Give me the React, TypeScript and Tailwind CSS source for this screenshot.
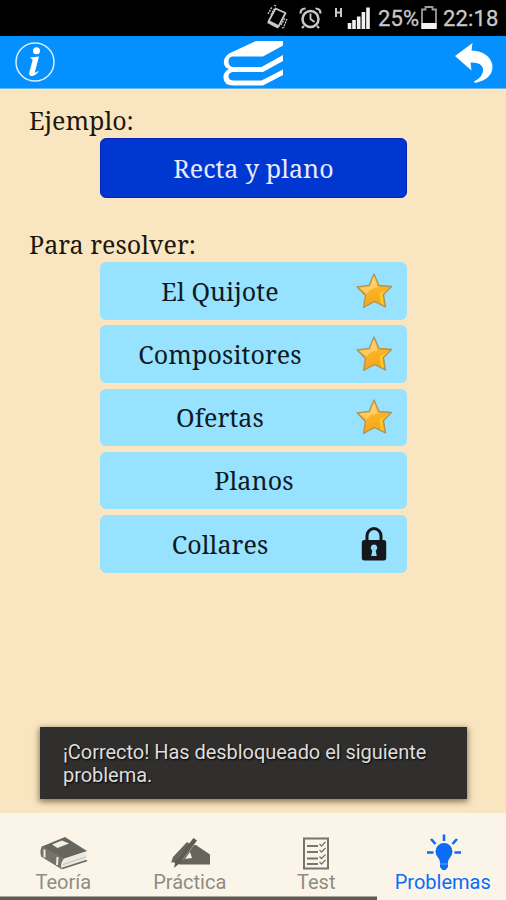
import type { ReactNode } from 'react';

type Problem = {
  name: string;
  status?: 'solved' | 'locked';
};

const problems: Problem[] = [
  { name: 'El Quijote', status: 'solved' },
  { name: 'Compositores', status: 'solved' },
  { name: 'Ofertas', status: 'solved' },
  { name: 'Planos' },
  { name: 'Collares', status: 'locked' },
];

const StarIcon = () => (
  <svg width="38" height="38" viewBox="0 0 38 38">
    <defs>
      <linearGradient id="star" x1="0.3" y1="0" x2="0.6" y2="1">
        <stop offset="0" stopColor="#fbd873" />
        <stop offset="0.4" stopColor="#fbb52b" />
        <stop offset="1" stopColor="#f6a510" />
      </linearGradient>
    </defs>
    <path
      d="M19 2 L24 13.5 L36.5 14.5 L28.5 22.5 L30.5 35 L19.5 29.5 L8.5 35.5 L10.5 23.5 L2 14.8 L14.2 13.4 Z"
      fill="url(#star)"
      stroke="#b3904f"
      strokeWidth="1.3"
      strokeLinejoin="round"
    />
    <path d="M18.5 5 L15 14.6 L5 16 L12 21.5 Q14 16.5 23 15.5 L22.3 14 Z" fill="#ffe9ad" opacity="0.45" />
    <path d="M34.5 15.5 L27 22.4 L28.8 33 L26 31.5 Q25.5 25 24.5 21.5 Q30 19 34.5 15.5Z" fill="#ffd736" opacity="0.8" />
  </svg>
);

const LockIcon = () => (
  <svg width="26" height="36" viewBox="0 0 26 36">
    <path d="M6 16 V10 a7 7.5 0 0 1 14 0 V16" fill="none" stroke="#14181c" strokeWidth="3" />
    <rect x="0.8" y="14" width="24.4" height="20.5" rx="2.5" fill="#14181c" />
    <path d="M13 18.5 a3.3 3.3 0 0 1 1.7 6.1 L15.8 30 h-5.6 l1.1 -5.4 A3.3 3.3 0 0 1 13 18.5Z" fill="#8fdcf8" />
  </svg>
);

const StatusBar = () => (
  <div className="h-9 bg-black flex items-center pl-[266px] text-[#c9c9c9] shrink-0">
    <svg width="118" height="36" viewBox="266 0 118 36" fill="none" stroke="currentColor">
      {/* vibrate */}
      <path d="M275.5 8.5 L285.5 13 L278.5 26.5 L268.5 21.5 Z" strokeWidth="1.8" strokeLinejoin="round" />
      <path d="M268 21.5 L278.5 27" strokeWidth="3.2" />
      <path d="M268 14 l4 -7 M271 15 l3 -6 M276 6 l-2 -1 M281 25 l4 -7 M284 26 l3 -7 M282 28 l3 -1" strokeWidth="1.3" strokeDasharray="2 0.8" />
      {/* alarm */}
      <circle cx="310.500" cy="19" r="8" strokeWidth="2.5" />
      <path d="M310.500 13.500 V19 L314.500 22" strokeWidth="1.8" />
      <path d="M300.500 13.500 q0 -5 5 -5 M320.500 13.500 q0 -5 -5 -5 M304 26 l-2 2 M317 26 l2 2" strokeWidth="2.2" />
      {/* H badge */}
      <path d="M336 8 V17 M341 8 V17 M336 12.500 H341" strokeWidth="2" />
      {/* signal */}
      <path d="M349.500 29 V23 M354 29 V20 M358.700 29 V16.500 M363.400 29 V12 M368 29 V7.500" stroke="#f2f2f2" strokeWidth="3.6" />
    </svg>
    <span className="w-10 -ml-[6px] whitespace-nowrap text-[22px] leading-9 tracking-[0.1px] font-['Roboto',sans-serif] pt-0.5 [-webkit-text-stroke:0.3px]">25%</span>
    <svg className="ml-[2px]" width="18" height="36" viewBox="0 0 18 36" fill="none">
      <path d="M2 9.500 H5.500 V7 H12.500 V9.500 H16 V28 H2 Z" stroke="#9b9b9b" strokeWidth="1.8" />
      <rect x="1.500" y="23" width="15" height="6" fill="#f4f4f4" />
    </svg>
    <span className="ml-[5px] text-[22px] leading-9 font-['Roboto',sans-serif] pt-0.5 tracking-[0.15px] [-webkit-text-stroke:0.3px]">22:18</span>
  </div>
);

const Header = () => (
  <header className="h-[53px] bg-[#0590ff] border-b border-[#6db9e8] flex items-center justify-between pl-[14px] pr-3 shrink-0">
    <svg width="42" height="42" viewBox="0 0 42 42" fill="none">
      <circle cx="21" cy="21" r="19" stroke="#d9efff" strokeWidth="1.5" />
      <circle cx="22.500" cy="9.800" r="3.500" fill="#fff" />
      <path d="M16.500 16.500 L25 15.500 L21 30.500 Q20.500 33 24 30 L24.700 30.800 Q20.500 35.500 17 35 Q14.500 34.500 15.500 30.500 L18.500 19.500 Q19 17.500 16.500 17.600 Z" fill="#fff" />
    </svg>
    <svg className="-ml-[4px] mt-[3px]" width="62" height="50" viewBox="0 0 62 50" fill="none">
      <path d="M61 2 H34 L7 14.500 Q1 19 2 25 Q3 29 7 30 Q1 33 1.500 39 Q2 46.500 11 46.500 H41 L61 36 V30.500 L39.500 41.500 H12 Q6.500 41.500 6.500 37.500 Q6.500 33.500 11 33 H41 L61 22 V16 L39.500 28 H12 Q6.500 28 6.500 22.500 Q6.500 17.500 11 17.500 H41 L61 6.500 Z" fill="#fff" />
    </svg>
    <svg className="mt-[2px]" width="40" height="42" viewBox="0 0 40 42">
      <path d="M1 14 L18.500 1 L17.500 8.500 Q36 9.500 38.500 24 Q39 37 21 41 L20 39.500 Q30 34.500 29 26.500 Q27.500 20 16.500 20.500 L17.500 28.500 Z" fill="#fff" />
    </svg>
  </header>
);

const Toast = () => (
  <div className="absolute left-[40px] top-[727px] w-[427px] h-[72px] bg-[#312f2e] shadow-[0_2px_6px_1px_rgba(70,50,20,0.6)] pl-[23px] pt-[14px] text-[20px] leading-[23px] tracking-[-0.04px] text-[#dedede] font-['Roboto',sans-serif] [text-shadow:1px_1px_2px_#000]">
    ¡Correcto! Has desbloqueado el siguiente
    <br />
    problema.
  </div>
);

const Tab = ({ label, active, children }: { label: string; active?: boolean; children: ReactNode }) => (
  <div
    className={`w-[126.500px] flex flex-col items-center pt-[20px] text-[20px] leading-6 font-['Roboto',sans-serif] ${
      active ? 'text-[#0b6cf5]' : 'text-[#8e8c84]'
    }`}
  >
    {children}
    <span className="whitespace-nowrap -mt-px">{label}</span>
  </div>
);

const TabBar = () => (
  <nav className="h-[87px] bg-[#faf5e8] flex shrink-0 relative">
    <Tab label="Teoría">
      <svg width="50" height="38" viewBox="0 0 50 38">
        <path d="M27 4 L49 18 L25 26 L4 13.500 Z" fill="#66665f" />
        <path d="M4 13 Q1.500 17 3 23.500 L24 36.500 Q21.500 31 26 25.500 Z" fill="#74746c" />
        <path d="M26 26 L48 19 V27 L25 35 Q23 30 26 26Z" fill="#eae8df" />
        <path d="M25 31.500 L48 24" stroke="#b9b7ae" strokeWidth="0.8" />
        <path d="M24 35.500 L49 27.500" stroke="#66665f" strokeWidth="1.8" />
        <path d="M14 11.500 L24 7.500 L31 10.500 L19.500 15 Z" fill="#f2efe4" />
        <path d="M6.500 16.500 L6.500 24.500 M19.500 24 L19 32" stroke="#eeebdf" strokeWidth="2" />
      </svg>
    </Tab>
    <Tab label="Práctica">
      <svg width="44" height="38" viewBox="0 0 44 38">
        <path d="M18 12 L28 12 L42 21.500 V31.500 H12 L4 29 Z" fill="#66665f" />
        <path d="M27 6 L12.500 25" stroke="#f7f2e5" strokeWidth="5.5" fill="none" />
        <path d="M19 9 L5 24 L3 30 L8 27 L22 11 Z" fill="#66665f" />
        <path d="M25.500 5 L29 7.500 L12 30 L6 35 L7.500 28 Z" fill="#5d5d57" />
        <path d="M17 26 L22 19 L24 25 Z" fill="#faf5e8" />
      </svg>
    </Tab>
    <Tab label="Test">
      <svg width="28" height="38" viewBox="0 0 28 38" fill="none" stroke="#77756d">
        <rect x="2" y="5.500" width="24" height="30" strokeWidth="2" />
        <path d="M5 13 h11 M5 19 h11 M5 25.500 h11 M5 31 h11" strokeWidth="1.8" />
        <path d="M17.500 11 l2 2 4 -4 M17.500 17 l2 2 4 -4 M17.500 23.500 l2 2 4 -4 M17.500 29 l2 2 4 -4" strokeWidth="1.3" />
      </svg>
    </Tab>
    <Tab label="Problemas" active>
      <svg className="ml-[3px]" width="36" height="38" viewBox="0 0 36 38" fill="none" stroke="#0b6cf5">
        <path d="M18 1.500 V8 M5 6 L9.500 11 M31 6 L26.500 11 M1 19.500 H7.500 M28.500 19.500 H35" strokeWidth="2.6" />
        <path d="M18 10 a8.500 8.500 0 0 1 8.500 8.500 q0 3 -2.500 6 q-2 2.500 -2 5 v4.500 l-2.500 3 h-3 l-2.500 -3 V29.500 q0 -2.500 -2 -5 q-2.500 -3 -2.500 -6 a8.500 8.500 0 0 1 8.500 -8.500Z" fill="#0b6cf5" stroke="none" />
        <path d="M14 31 h8" stroke="#8ab7f5" strokeWidth="0.8" />
      </svg>
    </Tab>
    {/* progress strip over the bottom edge */}
    <div className="absolute left-0 bottom-0 w-[377px] h-1 bg-[#625b58] border-t border-[#aaa59d]" />
  </nav>
);

export default function App() {
  return (
    <div className="relative w-[506px] h-[900px] flex flex-col overflow-hidden bg-[#f9e6c0]">
      <StatusBar />
      <Header />
      <main className="flex-1 text-[25px] text-[#1d170f] font-['Droid_Serif','Noto_Serif','DejaVu_Serif_Condensed','DejaVu_Serif',serif]">
        <h2 className="h-[49px] pl-[29px] pt-[13px] leading-9">Ejemplo:</h2>
        <button className="block ml-[100px] w-[307px] h-[60px] rounded-md bg-[#0037d0] border border-[#0824b5] pt-px tracking-[0.05px] text-[#e8ebff]">
          Recta y plano
        </button>
        <h2 className="h-[64px] pl-[29px] pt-[28px] leading-9 tracking-[0.04px]">Para resolver:</h2>
        <div className="ml-[100px] w-[307px] flex flex-col gap-[5.8px]">
          {problems.map(({ name, status }) => (
            <button
              key={name}
              className="h-[57.5px] rounded-md bg-[#96e2ff] text-[#10191e] flex items-center"
            >
              <span className="flex-1 text-center pt-px pl-px tracking-[0.1px]">{name}</span>
              {status && (
                <span className="w-[68px] flex pl-0.5 justify-center">
                  {status === 'solved' ? <StarIcon /> : <LockIcon />}
                </span>
              )}
            </button>
          ))}
        </div>
      </main>
      <TabBar />
      <Toast />
    </div>
  );
}
